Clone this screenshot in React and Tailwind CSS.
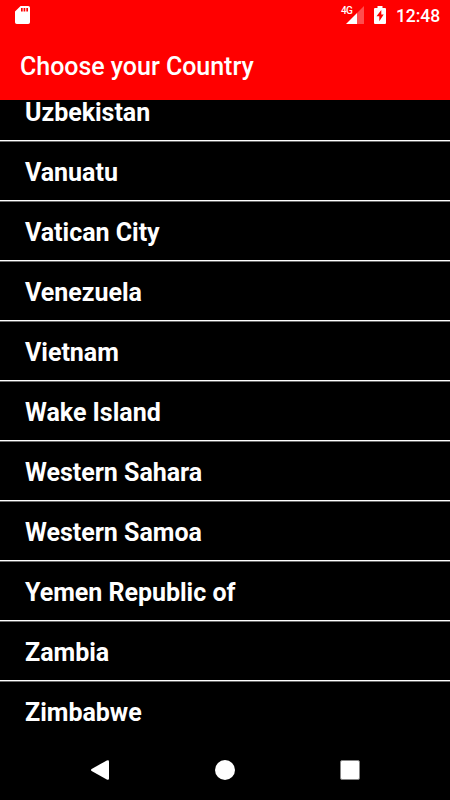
const countries = [
  'Uzbekistan',
  'Vanuatu',
  'Vatican City',
  'Venezuela',
  'Vietnam',
  'Wake Island',
  'Western Sahara',
  'Western Samoa',
  'Yemen Republic of',
  'Zambia',
  'Zimbabwe',
];

function StatusBar() {
  return (
    <div className="flex h-[30px] items-center justify-between pl-[15px] pr-[10px]">
      <svg width="15" height="18" viewBox="0 0 15 18" className="block">
        <path
          fill="#fff"
          fillRule="evenodd"
          d="M5.6 0H13.2Q15 0 15 1.8V16.2Q15 18 13.2 18H1.8Q0 18 0 16.2V5.6ZM6 2V5.5H7.7V2ZM8.6 2V5.5H10.3V2ZM11.3 2V5.5H13V2Z"
        />
      </svg>
      <div className="flex items-center">
        <div className="flex h-[18px] items-start">
          <span className="h-2 w-[11px] whitespace-nowrap text-[10px] font-medium leading-[9px] tracking-[-0.6px]">4G</span>
          <svg width="18" height="18" viewBox="0 0 18 18" className="-ml-[6px] mr-[10px] block">
            <path fill="#fff" fillOpacity="0.3" d="M11 7 18 0V18H11Z" />
            <path fill="#fff" d="M0 18 11 7V18Z" />
          </svg>
        </div>
        <svg width="12" height="18" viewBox="0 0 12 18" className="mr-[10px] block">
          <path
            fill="#fff"
            fillRule="evenodd"
            d="M3.5 0H8.5V2H11Q12 2 12 3V17Q12 18 11 18H1Q0 18 0 17V3Q0 2 1 2H3.5ZM7.3 4 2.5 10.2H5.3V15.2L9.7 8.6H7.3Z"
          />
        </svg>
        <span className="w-[44px] whitespace-nowrap pt-px text-[17.5px] font-medium leading-[30px] tracking-[-0.08px]">12:48</span>
      </div>
    </div>
  );
}

function NavigationBar() {
  return (
    <nav className="flex h-[60px] items-center justify-between bg-black px-[90px]">
      <svg width="20" height="20" viewBox="0 0 20 20" className="block">
        <path fill="#fff" d="M1.6 9.1 16.8 0.4Q19 -0.5 19 1.6V18.4Q19 20.5 16.8 19.6L1.6 10.9Q0.4 10 1.6 9.1Z" />
      </svg>
      <div className="size-5 rounded-full bg-white" />
      <div className="size-5 rounded-[2px] border border-[#858585] bg-white" />
    </nav>
  );
}

export default function App() {
  return (
    <div className="flex h-[800px] w-[450px] flex-col overflow-hidden bg-black font-['Roboto',sans-serif] text-white">
      <header className="h-[100px] shrink-0 bg-[#ff0000]">
        <StatusBar />
        <h1 className="px-5 pt-[2px] text-[25px] font-medium leading-[70px] tracking-[-0.03px]">Choose your Country</h1>
      </header>
      <main className="min-h-0 flex-1 overflow-hidden">
        <ul className="-mt-[18px]">
          {countries.map((name) => (
            <li key={name} className="h-[60px]">
              <div className="h-[58px] px-[25px] pt-px text-[25px] font-bold leading-[60px] tracking-[-0.02px]">{name}</div>
              <div className="h-px bg-white" />
              <div className="h-px bg-[#6b6b6b]" />
            </li>
          ))}
        </ul>
      </main>
      <NavigationBar />
    </div>
  );
}
